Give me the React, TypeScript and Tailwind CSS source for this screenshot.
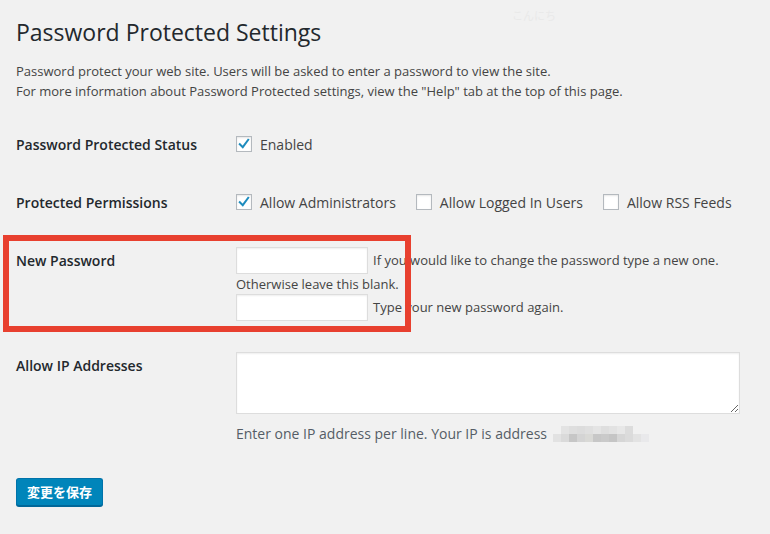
/**
 * Password Protected Settings screen (WordPress admin style)
 */

const font = "font-['Open_Sans','Noto_Sans_CJK_JP',sans-serif]"

function Checkbox({ checked }: { checked?: boolean }) {
  return (
    <span className="flex h-4 w-4 shrink-0 items-center justify-center border border-[#b4b9be] bg-white shadow-[inset_0_1px_2px_rgba(0,0,0,0.1)]">
      {checked && (
        <svg viewBox="0 0 16 16" className="h-4 w-4">
          <path d="M3.2 8.2 L6.6 11.6 L12.8 3.2" fill="none" stroke="#1e8cbe" strokeWidth="2.3" strokeLinecap="square" />
        </svg>
      )}
    </span>
  )
}

function CheckOption({ label, checked }: { label: string; checked?: boolean }) {
  return (
    <label className="flex items-center gap-2">
      <Checkbox checked={checked} />
      <span>{label}</span>
    </label>
  )
}

// pixelated (blurred) IP address
const mosaic = [
  ['bg-[#f1f1f1]', 'bg-[#e3e3e3]', 'bg-[#dedede]', 'bg-[#dcdcdc]', 'bg-[#dfdfdf]', 'bg-[#e4e4e4]', 'bg-[#dedede]', 'bg-[#e2e2e2]', 'bg-[#e7e7e7]', 'bg-[#dcdcdc]', 'bg-[#f1f1f1]', 'bg-[#f1f1f1]'],
  ['bg-[#e2e2e2]', 'bg-[#dadada]', 'bg-[#c6c6c6]', 'bg-[#d4d4d4]', 'bg-[#d9d9d6]', 'bg-[#c7c7c7]', 'bg-[#cacaca]', 'bg-[#c5c5c5]', 'bg-[#d6d6d6]', 'bg-[#dbdbdb]', 'bg-[#e3e3e3]', 'bg-[#e9e9eb]'],
]

const labelCls = 'w-[220px] shrink-0 pt-[21px] pb-[19px] leading-[18.2px] font-semibold text-[#23282d]'
const inputCls = 'h-[27px] w-[132px] border border-[#ddd] bg-white shadow-[inset_0_1px_2px_rgba(0,0,0,0.07)] outline-none'

export default function App() {
  return (
    <div className={`relative min-h-screen bg-[#f1f1f1] text-[14px] text-[#444] ${font}`}>
      {/* faint floating plugin text */}
      <span className="absolute left-[512px] top-[8px] text-[11px] text-[#e9e9e9]">こんにち</span>

      <div className="pl-4 pr-5 pt-[18px]">
        <h1 className="text-[23px] leading-[29px] font-normal text-[#23282d]">Password Protected Settings</h1>
        <p className="mt-[15px] text-[13px] leading-[19.5px]">
          Password protect your web site. Users will be asked to enter a password to view the site.
          <br />
          For more information about Password Protected settings, view the "Help" tab at the top of this page.
        </p>

        <div className="mt-[14px]">
          {/* Status */}
          <div className="flex">
            <div className={labelCls}>Password Protected Status</div>
            <div className="pt-5">
              <div className="flex h-[18px] items-center">
                <CheckOption label="Enabled" checked />
              </div>
            </div>
          </div>

          {/* Permissions */}
          <div className="flex">
            <div className={labelCls}>Protected Permissions</div>
            <div className="pt-5">
              <div className="flex h-[18px] items-center gap-5">
                <CheckOption label="Allow Administrators" checked />
                <CheckOption label="Allow Logged In Users" />
                <CheckOption label="Allow RSS Feeds" />
              </div>
            </div>
          </div>

          {/* New password */}
          <div className="relative flex">
            <div className={labelCls}>New Password</div>
            <div className="pt-[16px] pb-[15px] text-[13px]">
              <div className="flex items-center">
                <input type="password" className={inputCls} />
                <span className="ml-[5px]">If you would like to change the password type a new one.</span>
              </div>
              <div className="leading-[20px]">Otherwise leave this blank.</div>
              <div className="flex items-center">
                <input type="password" className={inputCls} />
                <span className="ml-[5px]">Type your new password again.</span>
              </div>
            </div>
            {/* highlight annotation */}
            <div className="pointer-events-none absolute left-[-13px] top-[4px] h-[97px] w-[408px] border-[6px] border-[#e8402f]" />
          </div>

          {/* IP addresses */}
          <div className="flex">
            <div className={labelCls}>Allow IP Addresses</div>
            <div className="pt-[16px] pb-[15px]">
              <textarea className="block h-[62px] w-[504px] resize-y border border-[#ddd] bg-white shadow-[inset_0_1px_2px_rgba(0,0,0,0.07)] outline-none" />
              <div className="mt-[10px] flex items-center leading-[20px] text-[#555d66]">
                <span>Enter one IP address per line. Your IP is address</span>
                <span className="ml-[6px] flex flex-col">
                  {mosaic.map((row, i) => (
                    <span key={i} className="flex">
                      {row.map((c, j) => (
                        <span key={j} className={`h-[8px] w-[8px] ${c}`} />
                      ))}
                    </span>
                  ))}
                </span>
              </div>
            </div>
          </div>
        </div>

        <button className="mt-[19px] h-[28px] w-[87px] rounded-[3px] border border-[#0073aa] border-b-[#006799] bg-[#0085ba] text-[13px] font-bold text-white shadow-[0_1px_0_#006799]">
          変更を保存
        </button>
      </div>
    </div>
  )
}
